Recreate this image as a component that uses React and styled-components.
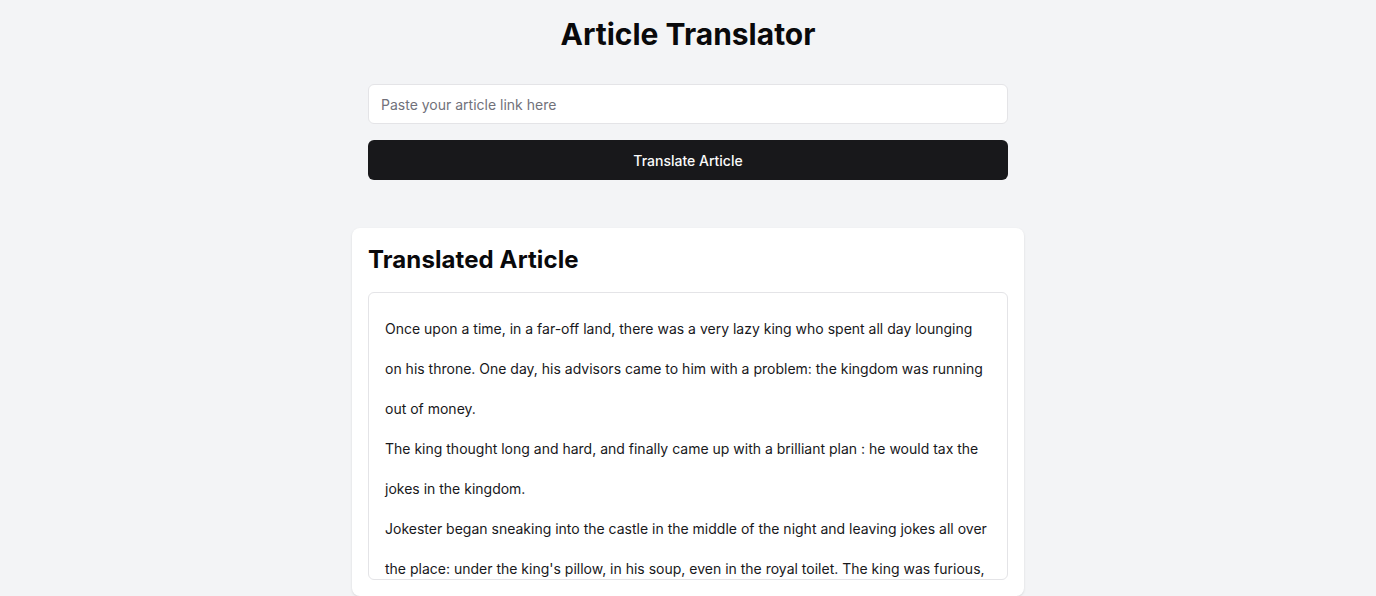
import React, { useState } from 'react';
import styled, { createGlobalStyle } from 'styled-components';

const GlobalStyle = createGlobalStyle`
  html, body { margin: 0; padding: 0; background: #f3f4f6; }
  body { font-family: Inter, "Liberation Sans", sans-serif; color: #09090b; }
  * { box-sizing: border-box; }
`;

const Page      = styled.div`
  min-height: 100vh; padding-top: 16px;
  display: flex; flex-direction: column; align-items: center;
`;
const Title     = styled.h1`
  margin: 0 0 32px; font-size: 30px; line-height: 36px;
  font-weight: 700; letter-spacing: 0;
`;
const Form      = styled.form`
  width: 640px; display: flex; flex-direction: column; gap: 16px;
`;
const Input     = styled.input`
  height: 40px; width: 100%; padding: 0 12px;
  font: 400 14px Inter, sans-serif; color: #09090b;
  background: #fff; border: 1px solid #e4e4e7; border-radius: 6px;
  outline: none;
  &::placeholder { color: #71717a; }
`;
const Button    = styled.button`
  height: 40px; width: 100%; border: none; border-radius: 6px;
  background: #18181b; color: #fafafa; cursor: pointer;
  font: 500 14px Inter, sans-serif;
`;
const Card      = styled.section`
  width: 672px; margin-top: 48px; padding: 16px;
  background: #fff; border-radius: 8px;
  box-shadow: 0 1px 3px rgba(0,0,0,0.08), 0 1px 2px rgba(0,0,0,0.04);
`;
const CardTitle = styled.h2`
  margin: 0 0 16px; font-size: 24px; line-height: 32px; font-weight: 700;
  letter-spacing: 0.1px;
`;
const Output    = styled.div`
  height: 288px; overflow: hidden; padding: 16px;
  border: 1px solid #e4e4e7; border-radius: 6px;
  font-size: 14px; line-height: 40px; color: #18181b;
`;
const Para      = styled.p`margin: 0;`;

const paragraphs = [
  'Once upon a time, in a far-off land, there was a very lazy king who spent all day lounging on his throne. One day, his advisors came to him with a problem: the kingdom was running out of money.',
  'The king thought long and hard, and finally came up with a brilliant plan : he would tax the jokes in the kingdom.',
  "Jokester began sneaking into the castle in the middle of the night and leaving jokes all over the place: under the king's pillow, in his soup, even in the royal toilet. The king was furious, but he couldn't figure out who was behind it.",
];

export default function App() {
  const [link, setLink] = useState('');

  return (
    <>
      <GlobalStyle />
      <Page>
        <Title>Article Translator</Title>
        <Form onSubmit={e => e.preventDefault()}>
          <Input
            type="text"
            placeholder="Paste your article link here"
            value={link}
            onChange={e => setLink(e.target.value)}
          />
          <Button type="submit">Translate Article</Button>
        </Form>
        <Card>
          <CardTitle>Translated Article</CardTitle>
          <Output>
            {paragraphs.map((p, i) => <Para key={i}>{p}</Para>)}
          </Output>
        </Card>
      </Page>
    </>
  );
}
